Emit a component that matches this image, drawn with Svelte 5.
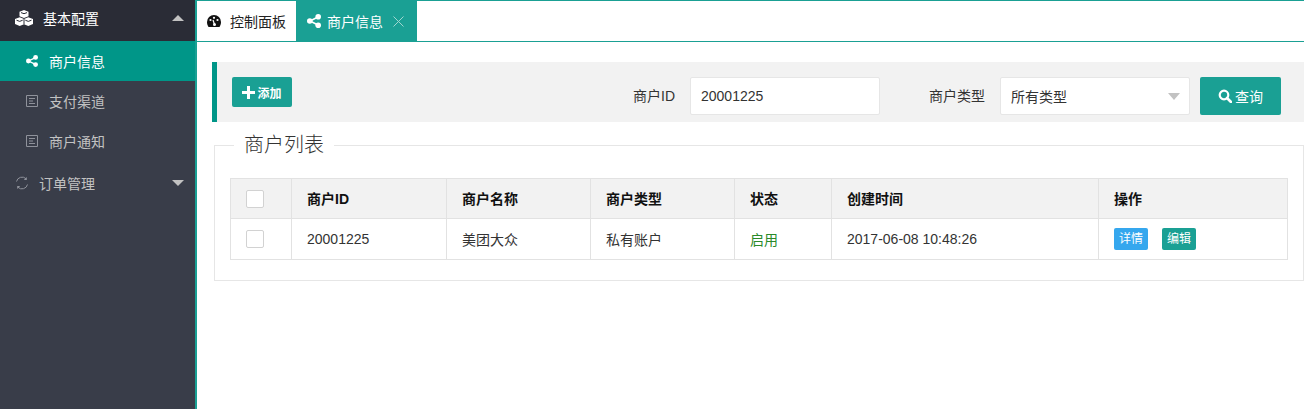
<script>
  const subItems = [
    { label: '商户信息', icon: 'share', active: true },
    { label: '支付渠道', icon: 'doc' },
    { label: '商户通知', icon: 'doc' }
  ];

  const columns = [
    { label: '商户ID', width: 155 },
    { label: '商户名称', width: 144 },
    { label: '商户类型', width: 144 },
    { label: '状态', width: 97 },
    { label: '创建时间', width: 267 },
    { label: '操作', width: 189 }
  ];

  const merchants = [
    { id: '20001225', name: '美团大众', type: '私有账户', status: '启用', created: '2017-06-08 10:48:26' }
  ];
</script>

{#snippet shareIcon(size)}
  <svg class="icon" width={size} height={size} viewBox="0 0 14 14" aria-hidden="true">
    <path d="M11 3 3 7l8 4" fill="none" stroke="currentColor" stroke-width="1.600" />
    <circle cx="11.200" cy="2.800" r="2.800" fill="currentColor" />
    <circle cx="2.800" cy="7" r="2.800" fill="currentColor" />
    <circle cx="11.200" cy="11.200" r="2.800" fill="currentColor" />
  </svg>
{/snippet}

{#snippet docIcon()}
  <svg class="icon doc" width="12" height="12" viewBox="0 0 12 12" aria-hidden="true">
    <path d="M.5.500h11v11H.5zM3 3.500h6M3 6h4M3 8.500h6" fill="none" stroke="currentColor" stroke-width="1" />
  </svg>
{/snippet}

<div class="layout">
  <aside class="sidebar">
    <div class="group open">
      <svg class="icon group-icon" width="18" height="16" viewBox="0 0 18 16" aria-hidden="true">
        <path fill="#fff" d="M9 0l4.500 1.700v4.600L9 8 4.500 6.300V1.700zM4.700 7.300l4.300 1.600 4.300-1.600L18 9v5l-4.700 2L9 14.300 4.700 16 0 14V9z" />
        <path fill="none" stroke="#2a2c36" stroke-width="1" d="M6 2.600 9 3.700l3-1.100M9 8.900v5.400M1.500 10.200l3.200 1.200 3-1.200M10.300 10.200l3 1.200 3.200-1.200" />
      </svg>
      <span>基本配置</span>
      <i class="caret up"></i>
    </div>
    <ul class="sub">
      {#each subItems as item}
        <li class:active={item.active}>
          {#if item.icon === 'share'}
            {@render shareIcon(12)}
          {:else}
            {@render docIcon()}
          {/if}
          <span>{item.label}</span>
        </li>
      {/each}
    </ul>
    <div class="group">
      <svg class="icon group-icon-sm" width="14" height="14" viewBox="0 0 14 14" aria-hidden="true">
        <path d="M1.500 5.500A5.700 5.700 0 0 1 11 2.700M12.500 8.500A5.700 5.700 0 0 1 3 11.300" fill="none" stroke="currentColor" stroke-width="1" />
        <path d="M11.800 1v3h-3zM2.200 13v-3h3z" fill="currentColor" />
      </svg>
      <span>订单管理</span>
      <i class="caret down"></i>
    </div>
  </aside>

  <main class="main">
    <nav class="tabs">
      <div class="tab">
        <svg class="icon" width="14" height="12" viewBox="0 0 14 12" aria-hidden="true">
          <path fill="#111" d="M7 0a7 7 0 0 1 7 7c0 2-.6 3.500-1.500 5h-11C.6 10.500 0 9 0 7a7 7 0 0 1 7-7z" />
          <circle cx="3.500" cy="5" r="1.100" fill="#fff" />
          <circle cx="7" cy="2.800" r="1.100" fill="#fff" />
          <circle cx="10.500" cy="5" r="1.100" fill="#fff" />
          <path d="M7.500 9.500 6 5" stroke="#fff" stroke-width="1.200" />
          <circle cx="7.500" cy="9.500" r="1.500" fill="#fff" />
        </svg>
        <span>控制面板</span>
      </div>
      <div class="tab current">
        {@render shareIcon(14)}
        <span>商户信息</span>
        <svg class="close" width="11" height="11" viewBox="0 0 11 11" aria-hidden="true">
          <path d="m.5.500 10 10M10.500.500l-10 10" stroke="currentColor" stroke-width="1" />
        </svg>
      </div>
    </nav>

    <div class="content">
      <div class="toolbar">
        <button class="btn add">
          <svg class="icon" width="13" height="13" viewBox="0 0 13 13" aria-hidden="true">
            <path d="M5 0h3v5h5v3H8v5H5V8H0V5h5z" fill="currentColor" />
          </svg>
          添加
        </button>
        <div class="filters">
          <span class="filter-label">商户ID</span>
          <input class="field id-field" value="20001225" />
          <span class="filter-label type-label">商户类型</span>
          <div class="field select">
            <span>所有类型</span>
            <i class="caret select-caret"></i>
          </div>
          <button class="btn search">
            <svg class="icon" width="14" height="14" viewBox="0 0 14 14" aria-hidden="true">
              <circle cx="6" cy="6" r="4.300" fill="none" stroke="currentColor" stroke-width="2.200" />
              <path d="m9 9 4 4" stroke="currentColor" stroke-width="2.600" stroke-linecap="round" />
            </svg>
            查询
          </button>
        </div>
      </div>

      <fieldset class="panel">
        <legend>商户列表</legend>
        <table>
          <colgroup>
            <col style="width: 61px" />
            {#each columns as col}
              <col style="width: {col.width}px" />
            {/each}
          </colgroup>
          <thead>
            <tr>
              <th class="check"><span class="box"></span></th>
              {#each columns as col}
                <th>{col.label}</th>
              {/each}
            </tr>
          </thead>
          <tbody>
            {#each merchants as m}
              <tr>
                <td class="check"><span class="box"></span></td>
                <td>{m.id}</td>
                <td>{m.name}</td>
                <td>{m.type}</td>
                <td class="enabled">{m.status}</td>
                <td>{m.created}</td>
                <td>
                  <span class="mini info">详情</span>
                  <span class="mini edit">编辑</span>
                </td>
              </tr>
            {/each}
          </tbody>
        </table>
      </fieldset>
    </div>
  </main>
</div>

<style>
  :global(body) {
    margin: 0;
    overflow: hidden;
    background: #fff;
  }

  .layout {
    display: flex;
    height: 409px;
    overflow: hidden;
    font-family: "Liberation Sans", "Noto Sans CJK SC", sans-serif;
    font-size: 14px;
    color: #333;
  }

  .icon {
    display: block;
    flex: none;
  }

  .sidebar {
    width: 195px;
    flex: none;
    background: #393d49;
    border-right: 2px solid #1aa094;
    color: #c2c2c2;
  }

  .group {
    display: flex;
    align-items: center;
    box-sizing: border-box;
    height: 44px;
    padding: 0 11px 1px 15px;
    color: #c2c2c2;
  }

  /* the nav is scrolled a little, so the first group is cut off at the top */
  .group.open {
    background: #2a2c36;
    color: #fff;
    margin-top: -3px;
    padding-bottom: 3px;
  }

  .group-icon {
    margin-right: 10px;
  }

  .group-icon-sm {
    margin-right: 10px;
    color: #8f929b;
  }

  .group span {
    flex: 1;
  }

  .caret {
    width: 0;
    height: 0;
    border-left: 6px solid transparent;
    border-right: 6px solid transparent;
  }

  .caret.up {
    border-bottom: 6px solid #c2c2c2;
  }

  .caret.down {
    border-top: 6px solid #c2c2c2;
  }

  .sub {
    list-style: none;
    margin: 0;
    padding: 0;
  }

  .sub li {
    display: flex;
    align-items: center;
    gap: 11px;
    box-sizing: border-box;
    height: 40px;
    padding: 0 0 1px 26px;
  }

  .sub li.active {
    background: #009688;
    color: #fff;
  }

  .doc {
    color: #8f929b;
  }

  .main {
    flex: 1;
    min-width: 0;
  }

  .tabs {
    display: flex;
    height: 40px;
    border-top: 1px solid #1aa094;
    border-bottom: 1px solid #1aa094;
  }

  .tab {
    display: flex;
    align-items: center;
    gap: 9px;
    padding: 0 10px;
    color: #222;
    font-size: 14px;
  }

  .tab.current {
    background: #1aa094;
    color: #fff;
    gap: 6px;
    padding: 0 13px 0 11px;
  }

  .close {
    margin-left: 4px;
    color: #9fd6d0;
  }

  .content {
    padding: 20px 0 0 15px;
  }

  .toolbar {
    display: flex;
    justify-content: space-between;
    height: 60px;
    box-sizing: border-box;
    padding: 15px 23px 0 15px;
    background: #f2f2f2;
    border-left: 5px solid #009688;
  }

  .btn {
    display: flex;
    align-items: center;
    border: none;
    border-radius: 2px;
    background: #1aa094;
    color: #fff;
    font: inherit;
    padding: 0;
  }

  .add {
    height: 30px;
    width: 60px;
    font-size: 12px;
    font-weight: bold;
    justify-content: center;
    gap: 2px;
  }

  .filters {
    display: flex;
    align-items: flex-start;
  }

  .filter-label {
    line-height: 38px;
    color: #333;
    margin-right: 15px;
  }

  .type-label {
    margin-left: 49px;
  }

  .field {
    box-sizing: border-box;
    height: 38px;
    background: #fff;
    border: 1px solid #e6e6e6;
    border-radius: 2px;
    font: inherit;
    color: #333;
    padding: 0 10px;
  }

  .id-field {
    width: 190px;
  }

  .select {
    display: flex;
    align-items: center;
    justify-content: space-between;
    width: 190px;
    margin-right: 10px;
    padding-right: 9px;
  }

  .select-caret {
    border-top: 7px solid #c2c2c2;
  }

  .search {
    width: 81px;
    height: 38px;
    justify-content: center;
    gap: 3px;
  }

  .panel {
    margin: 10px 0 0 2px;
    padding: 20px 15px 20px;
    border: 1px solid #e6e6e6;
    min-width: 0;
  }

  legend {
    margin-left: 4px;
    padding: 0 10px;
    font-size: 20px;
    font-weight: 300;
    line-height: 26px;
    color: #333;
  }

  table {
    width: 1057px;
    table-layout: fixed;
    border-collapse: collapse;
    color: #333;
  }

  th,
  td {
    border: 1px solid #e2e2e2;
    padding: 0 15px;
    font-size: 14px;
    text-align: left;
  }

  th {
    height: 37px;
    padding-bottom: 2px;
    background: #f2f2f2;
    color: #111;
    font-weight: bold;
  }

  td {
    height: 40px;
  }

  th.check,
  td.check {
    padding: 0 0 0 15px;
  }

  .box {
    display: block;
    box-sizing: border-box;
    width: 18px;
    height: 18px;
    background: #fff;
    border: 1px solid #d2d2d2;
    border-radius: 2px;
  }

  .enabled {
    color: #2a8a2a;
  }

  .mini {
    display: inline-block;
    width: 34px;
    height: 22px;
    line-height: 22px;
    text-align: center;
    font-size: 12px;
    color: #fff;
    border-radius: 2px;
  }

  .info {
    background: #35a7ee;
  }

  .edit {
    margin-left: 10px;
    background: #1aa094;
  }
</style>
